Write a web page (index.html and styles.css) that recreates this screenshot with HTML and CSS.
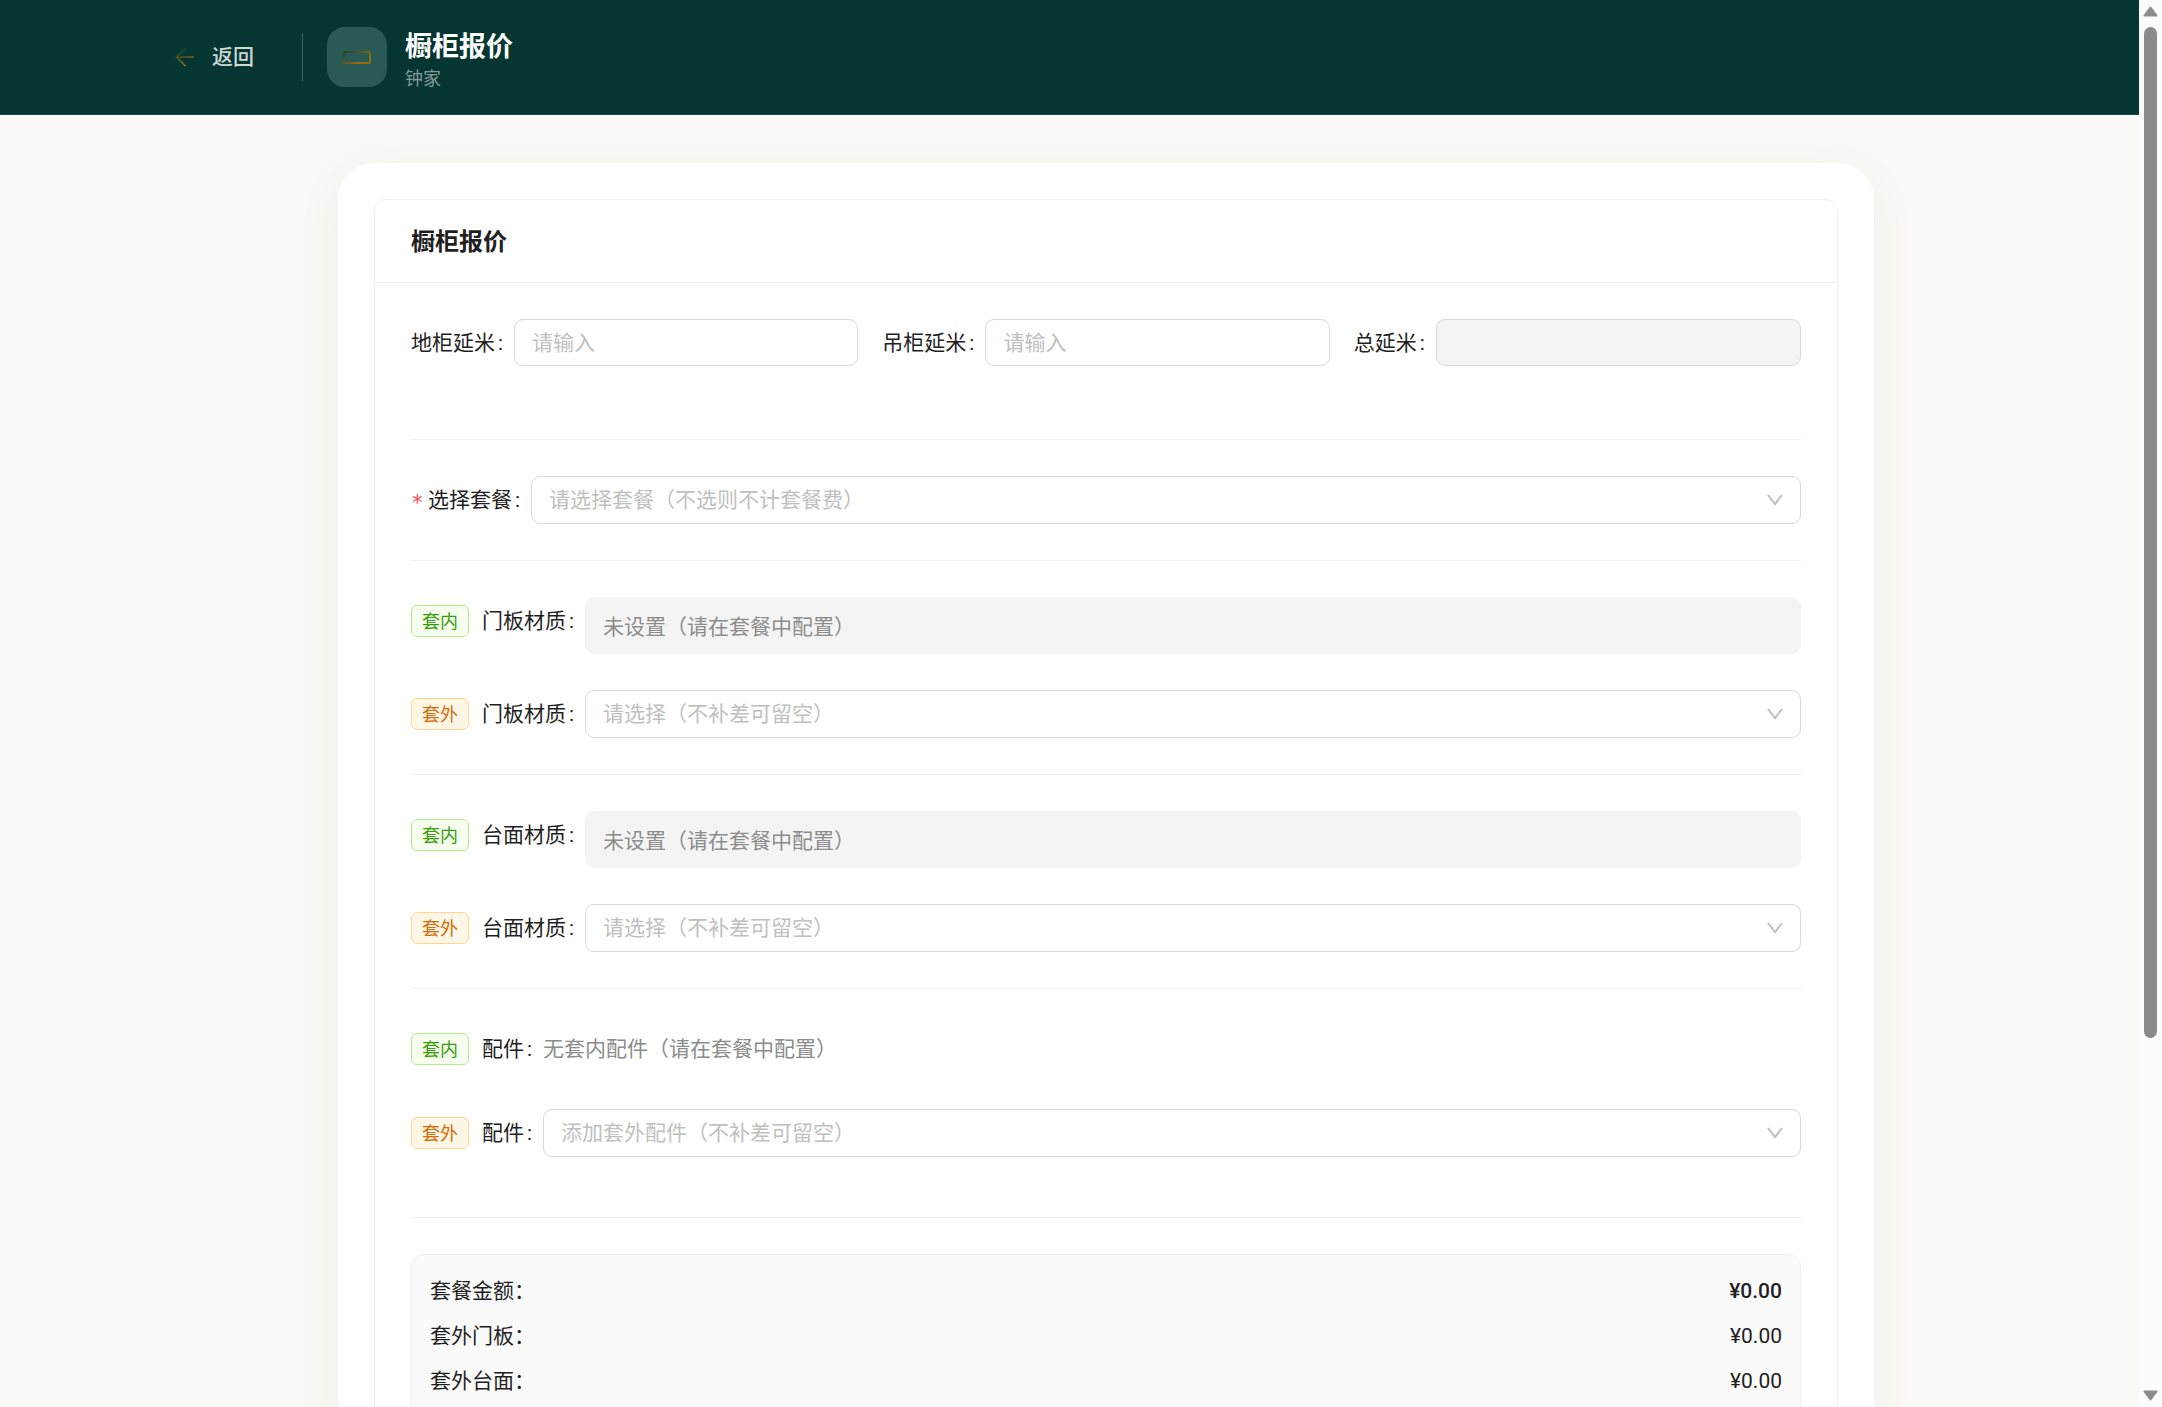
FILE: index.html
```
<!DOCTYPE html>
<html lang="zh-CN">
  <head>
    <meta charset="UTF-8" />
    <meta name="viewport" content="width=device-width, initial-scale=1.0" />
    <title>橱柜报价</title>
    <link rel="stylesheet" href="styles.css">
  </head>

  <body>
    <div class="view">
      <header class="topbar">
        <button class="back-button" type="button">
          <svg class="back-icon" width="20" height="20" viewBox="0 0 20 20" fill="none">
            <defs>
              <linearGradient id="goldArrow" gradientUnits="userSpaceOnUse" x1="6" y1="0" x2="13" y2="20">
                <stop offset="0" stop-color="#063832" />
                <stop offset="1" stop-color="#a87812" />
              </linearGradient>
            </defs>
            <path d="M19 10H1.5M10.5 1 1.500 10l9 9" stroke="url(#goldArrow)" stroke-width="1.7" />
          </svg>
          返回
        </button>
        <div class="topbar-line"></div>
        <div class="logo">
          <svg width="28" height="14" viewBox="0 0 28 14" fill="none">
            <defs>
              <linearGradient id="goldBox" gradientUnits="userSpaceOnUse" x1="5" y1="-2" x2="14" y2="13">
                <stop offset="0" stop-color="#0d4039" />
                <stop offset="1" stop-color="#92690f" />
              </linearGradient>
            </defs>
            <rect x="1" y="2" width="26" height="11" rx="1" stroke="url(#goldBox)" stroke-width="2" />
          </svg>
        </div>
        <div class="topbar-text">
          <h1>橱柜报价</h1>
          <p>钟家</p>
        </div>
      </header>

      <main class="main">
        <div class="panel">
          <form class="card">
            <h2 class="card-head">橱柜报价</h2>
            <div class="card-body">
              <div class="form-grid">
                <div class="form-item">
                  <label for="base">地柜延米<span class="colon">:</span></label>
                  <input class="field" id="base" type="text" placeholder="请输入" />
                </div>
                <div class="form-item">
                  <label for="wall">吊柜延米<span class="colon">:</span></label>
                  <input class="field" id="wall" type="text" placeholder="请输入" />
                </div>
                <div class="form-item">
                  <label for="total">总延米<span class="colon">:</span></label>
                  <input class="field" id="total" type="text" disabled />
                </div>
              </div>

              <section class="group">
                <div class="form-item">
                  <label for="package"><span class="required">*</span>选择套餐<span class="colon">:</span></label>
                  <div class="select-wrap">
                    <select class="field" id="package">
                      <option>请选择套餐（不选则不计套餐费）</option>
                    </select>
                    <svg class="chevron" viewBox="0 0 16 12"><path d="M1 1l7 9 7-9" /></svg>
                  </div>
                </div>
              </section>

              <section class="group">
                <div class="form-item">
                  <span class="tag tag-in">套内</span>
                  <span class="label">门板材质<span class="colon">:</span></span>
                  <div class="readonly">未设置（请在套餐中配置）</div>
                </div>
                <div class="form-item">
                  <span class="tag tag-out">套外</span>
                  <label for="door">门板材质<span class="colon">:</span></label>
                  <div class="select-wrap">
                    <select class="field" id="door">
                      <option>请选择（不补差可留空）</option>
                    </select>
                    <svg class="chevron" viewBox="0 0 16 12"><path d="M1 1l7 9 7-9" /></svg>
                  </div>
                </div>
              </section>

              <section class="group">
                <div class="form-item">
                  <span class="tag tag-in">套内</span>
                  <span class="label">台面材质<span class="colon">:</span></span>
                  <div class="readonly">未设置（请在套餐中配置）</div>
                </div>
                <div class="form-item">
                  <span class="tag tag-out">套外</span>
                  <label for="counter">台面材质<span class="colon">:</span></label>
                  <div class="select-wrap">
                    <select class="field" id="counter">
                      <option>请选择（不补差可留空）</option>
                    </select>
                    <svg class="chevron" viewBox="0 0 16 12"><path d="M1 1l7 9 7-9" /></svg>
                  </div>
                </div>
              </section>

              <section class="group group-last">
                <div class="form-item">
                  <span class="tag tag-in">套内</span>
                  <span class="label">配件<span class="colon">:</span></span>
                  <span class="empty">无套内配件（请在套餐中配置）</span>
                </div>
                <div class="form-item">
                  <span class="tag tag-out">套外</span>
                  <label for="parts">配件<span class="colon">:</span></label>
                  <div class="select-wrap">
                    <select class="field" id="parts">
                      <option>添加套外配件（不补差可留空）</option>
                    </select>
                    <svg class="chevron" viewBox="0 0 16 12"><path d="M1 1l7 9 7-9" /></svg>
                  </div>
                </div>
              </section>

              <section class="group">
                <div class="summary">
                  <div class="summary-row"><span>套餐金额：</span><strong>¥0.00</strong></div>
                  <div class="summary-row"><span>套外门板：</span><span>¥0.00</span></div>
                  <div class="summary-row"><span>套外台面：</span><span>¥0.00</span></div>
                </div>
              </section>
            </div>
          </form>
        </div>
      </main>
    </div>

    <div class="scrollbar">
      <svg width="15" height="11" viewBox="0 0 15 11"><path d="M7.500 1.500 13.500 9.500h-12z" /></svg>
      <div class="scroll-track"><div class="scroll-thumb"></div></div>
      <svg width="15" height="11" viewBox="0 0 15 11"><path d="M7.500 9.500 1.500 1.500h12z" /></svg>
    </div>
  </body>
</html>
```

FILE: styles.css
```
* {
  box-sizing: border-box;
}

body {
  display: flex;
  height: 100vh;
  margin: 0;
  overflow: hidden;
  background-color: #faf9f5;
  color: #1f1f1f;
  font-family: Roboto, "Noto Sans CJK SC", sans-serif;
  font-size: 21px;
  line-height: 33px;
}

h1,
h2,
p {
  margin: 0;
}

.view {
  flex: 1;
  min-width: 0;
  overflow: hidden;
}

/* Top bar */
.topbar {
  display: flex;
  align-items: center;
  height: 115px;
  padding: 0 157px;
  background-color: #053631;
  border-bottom: 1px solid #1e4a46;
}

.back-button {
  display: flex;
  align-items: center;
  gap: 17px;
  padding: 12px 18px;
  border: none;
  background: none;
  color: #cdd7d6;
  font: inherit;
  font-weight: 500;
  cursor: pointer;
}

.topbar-line {
  width: 1px;
  height: 48px;
  margin: 0 24px 0 30px;
  background-color: #37605c;
}

.logo {
  display: flex;
  align-items: center;
  justify-content: center;
  width: 60px;
  height: 60px;
  margin-right: 18px;
  border-radius: 18px;
  background-color: #2a5a55;
}

.topbar-text {
  padding-top: 10px;
}

.topbar-text h1 {
  color: #fff;
  font-size: 27px;
  font-weight: 700;
  line-height: 34px;
}

.topbar-text p {
  color: #829b98;
  font-size: 18px;
  line-height: 30px;
}

/* Quote form */
.main {
  padding: 48px 0 48px 73px;
}

.panel {
  max-width: 1536px;
  margin: 0 auto;
  padding: 36px;
  border-radius: 36px;
  background-color: #fff;
  box-shadow: 0 12px 48px rgba(6, 78, 59, 0.06);
}

.card {
  border: 1px solid #f0f0f0;
  border-radius: 12px;
}

.card-head {
  padding: 3px 36px 0;
  border-bottom: 1px solid #f0f0f0;
  font-size: 24px;
  font-weight: 700;
  line-height: 79px;
}

.card-body {
  padding: 36px;
}

.form-grid {
  display: grid;
  grid-template-columns: repeat(3, 1fr);
  gap: 24px;
  margin-bottom: 72px;
}

.form-item {
  display: flex;
  align-items: flex-start;
}

.form-item label,
.label,
.empty {
  flex: none;
  line-height: 48px;
}

.colon {
  margin: 0 11px 0 3px;
}

.required {
  display: inline-block;
  width: 17px;
  color: #ff4d4f;
  font-family: "DejaVu Sans Mono", monospace;
  line-height: 1;
  vertical-align: -3px;
}

.field {
  flex: 1;
  width: 100%;
  min-width: 0;
  height: 47px;
  padding: 0 17px;
  border: 1px solid #d9d9d9;
  border-radius: 9px;
  background-color: #fff;
  color: #bfbfbf;
  font: inherit;
  appearance: none;
}

.field::placeholder {
  color: #bfbfbf;
}

.field:disabled {
  background-color: #f4f4f4;
}

.select-wrap {
  display: grid;
  flex: 1;
  align-items: center;
}

.select-wrap .field,
.chevron {
  grid-area: 1 / 1;
}

.select-wrap .field {
  height: 48px;
}

.chevron {
  justify-self: end;
  width: 16px;
  height: 12px;
  margin-right: 18px;
  fill: none;
  stroke: #bfbfbf;
  stroke-width: 2;
  pointer-events: none;
}

.group {
  display: grid;
  gap: 36px;
  margin-bottom: 36px;
  padding-top: 36px;
  border-top: 1px solid #f0f0f0;
}

.group-last {
  margin-bottom: 60px;
}

.tag {
  flex: none;
  margin: 8px 13px 0 0;
  padding: 2px 10px 0;
  border: 1px solid;
  border-radius: 6px;
  font-size: 18px;
  line-height: 28px;
}

.tag-in {
  border-color: #b7eb8f;
  background-color: #f6ffed;
  color: #389e0d;
}

.tag-out {
  border-color: #ffd591;
  background-color: #fff7e6;
  color: #d46b08;
}

.readonly {
  flex: 1;
  padding: 14px 18px 10px;
  border-radius: 9px;
  background-color: #f4f4f4;
  color: #8c8c8c;
}

.empty {
  color: #8c8c8c;
}

.summary {
  display: grid;
  gap: 12px;
  padding: 20px 18px 60px;
  border: 1px solid #f0f0f0;
  border-radius: 12px;
  background-color: #fafafa;
}

.summary-row {
  display: flex;
  justify-content: space-between;
}

.summary-row strong {
  font-weight: 500;
}

/* Scrollbar */
.scrollbar {
  display: flex;
  flex-direction: column;
  align-items: center;
  gap: 10px;
  width: 23px;
  padding: 6px 0;
  background-color: #fcfcfc;
}

.scrollbar svg {
  fill: #8b8b8b;
  stroke: #8b8b8b;
  stroke-width: 2;
  stroke-linejoin: round;
}

.scroll-track {
  flex: 1;
}

.scroll-thumb {
  width: 13px;
  height: 74.7%;
  border-radius: 7px;
  background-color: #8b8b8b;
}
```
